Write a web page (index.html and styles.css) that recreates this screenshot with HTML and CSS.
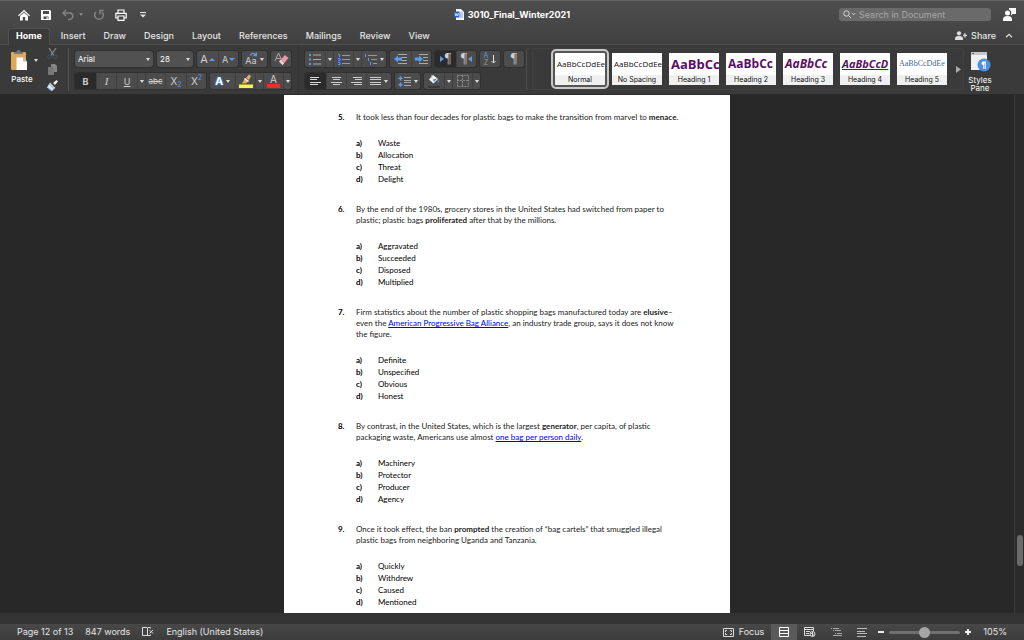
FILE: index.html
```
<!DOCTYPE html>
<html lang="en">
<head>
    <meta charset="UTF-8">
    <meta name="viewport" content="width=device-width, initial-scale=1.0">
    <title>3010_Final_Winter2021</title>
    <link rel="stylesheet" href="styles.css">
</head>
<body>
    <header class="titlebar">
        <div class="quick">
            <button aria-label="Home"><svg width="12" height="12" viewBox="0 0 12 12"><path d="M0 6.4L6 .8l6 5.6-.8.9L6 2.6.8 7.3z" fill="#fff"/><path d="M2 7l4-3.6L10 7v4.5H7.2V8H4.8v3.500H2z" fill="#fff"/></svg></button>
            <button aria-label="Save"><svg width="12" height="12" viewBox="0 0 12 12"><path d="M1 1h9l1 1v9H1z" fill="#fff"/><path d="M3 2h6v3H3zM3.500 7.500h5V10h-5z" fill="#484848"/><path d="M6.500 8h1.200v2H6.500z" fill="#fff"/></svg></button>
            <button class="undo" aria-label="Undo"><svg width="12" height="12" viewBox="0 0 12 12" fill="none" stroke="#858585" stroke-width="1.400"><path d="M4 1L1 4l3 3M1 4h6.500a3 3 0 0 1 0 6.500H6"/></svg><i class="caret dim"></i></button>
            <button aria-label="Redo"><svg width="12" height="12" viewBox="0 0 12 12" fill="none" stroke="#858585" stroke-width="1.400"><path d="M3 3a4.300 4.300 0 1 0 6 0M6.500 1.500h4M7 1.500v4"/></svg></button>
            <button aria-label="Print"><svg width="12" height="12" viewBox="0 0 12 12" fill="none" stroke="#fff" stroke-width="1.200"><path d="M3 4V1h6v3M2.500 9H.8V4.300h10.400V9H9.500M3 7h6v4.400H3z"/></svg></button>
            <button class="more" aria-label="Customize toolbar"><svg width="6" height="6" viewBox="0 0 6 6"><path d="M0 0h6v1H0zM0 2.500h6L3 5.500z" fill="#e6e6e6"/></svg></button>
        </div>
        <h1 class="title"><svg width="10" height="11" viewBox="0 0 10 11"><path d="M2 0h5l3 3v8H2z" fill="#f3f6fb"/><path d="M6 4h3M6 6h3M6 8h3" stroke="#6b9bdd"/><path d="M0 2.500h5.500v6H0z" fill="#2b5fc0"/><path d="M1 4l.9 3L2.800 4.500 3.700 7l.8-3" fill="none" stroke="#fff" stroke-width=".7"/></svg>3010_Final_Winter2021</h1>
        <div class="title-right">
            <label class="search"><svg width="13" height="9" viewBox="0 0 13 9" fill="none" stroke="#d8d8d8"><circle cx="3.500" cy="3.500" r="2.700"/><path d="M5.500 5.500L8 8M9 3.200l1.600 1.600L12.200 3.200"/></svg><input type="text" placeholder="Search in Document" aria-label="Search in Document"></label>
            <button aria-label="Account"><svg width="13" height="13" viewBox="0 0 13 13" fill="#fff"><path d="M6 0h7v6H9.500L8 7.500V6C9 5 8 2 6 1.800z"/><circle cx="4.500" cy="5" r="2.500"/><path d="M0 13v-2c0-2 2-3 4.500-3S9 9 9 11v2z"/></svg></button>
        </div>
    </header>

    <nav class="tabs">
        <a href="#" class="tab active">Home</a>
        <a href="#" class="tab">Insert</a>
        <a href="#" class="tab">Draw</a>
        <a href="#" class="tab">Design</a>
        <a href="#" class="tab">Layout</a>
        <a href="#" class="tab">References</a>
        <a href="#" class="tab">Mailings</a>
        <a href="#" class="tab">Review</a>
        <a href="#" class="tab">View</a>
        <button class="share"><svg width="12" height="9" viewBox="0 0 12 9" fill="#ddd"><circle cx="4" cy="2.300" r="2.100"/><path d="M0 9V7.500C0 5.500 2 5 4 5s4 .5 4 2.500V9zM9.300 2h1.200v1.800H12V5h-1.500v1.800H9.300V5H8V3.800h1.300z"/></svg>Share</button>
        <button class="collapse" aria-label="Collapse ribbon"><svg width="8" height="5" viewBox="0 0 8 5" fill="none" stroke="#ddd" stroke-width="1.300"><path d="M1 4.300L4 1.300l3 3"/></svg></button>
    </nav>

    <section class="ribbon">
        <div class="clipboard">
            <button class="paste"><span class="paste-icon"><svg width="18" height="22" viewBox="0 0 18 22"><rect x="1" y="3" width="15" height="18" rx="1" fill="#dba95c"/><path d="M4 5V3h2.500a2 2 0 0 1 4 0H13v2z" fill="#777"/><path d="M6.500 8.500h6.500l4 4V21H6.500z" fill="#fff"/><path d="M13 8.500l4 4h-4z" fill="#bbb"/></svg><i class="caret"></i></span><span class="paste-text">Paste</span></button>
            <div class="clip-tools">
                <button aria-label="Cut"><svg width="11" height="11" viewBox="0 0 11 11" fill="none"><path d="M2 0l5 7.500M9 0L4 7.500" stroke="#858585" stroke-width="1.300"/><circle cx="2.500" cy="8.800" r="1.700" stroke="#3b5273"/><circle cx="8.500" cy="8.800" r="1.700" stroke="#3b5273"/></svg></button>
                <button aria-label="Copy"><svg width="11" height="11" viewBox="0 0 11 11"><path d="M4 0h4l2 2v6H4z" fill="#858585"/><path d="M1 3h4l2 2v6H1z" fill="#777"/></svg></button>
                <button aria-label="Format painter"><svg width="11" height="11" viewBox="0 0 11 11"><path d="M9.500 0L11 1.500 8 5 6 3z" fill="#eee"/><path d="M3 2.500L8.500 8 7 9 2 4z" fill="#ccc"/><path d="M2 4l5 5-2 2-5-3.500z" fill="#d8e9ff"/><path d="M1 7l4 4-3-1z" fill="#5a9cf0"/></svg></button>
            </div>
        </div>

        <div class="group font-group">
            <div class="row">
                <label class="combo font-name"><select aria-label="Font"><option>Arial</option></select><i class="caret"></i></label>
                <label class="combo font-size"><select aria-label="Font size"><option>28</option></select><i class="caret"></i></label>
                <div class="set">
                    <button class="w21" aria-label="Grow font"><span class="glyph big">A</span><i class="tri up"></i></button>
                    <button class="w20" aria-label="Shrink font"><span class="glyph">A</span><i class="tri down"></i></button>
                </div>
                <div class="set"><button class="w25" aria-label="Change case"><span class="glyph case">Aa<svg width="7" height="5" viewBox="0 0 7 5" fill="none" stroke="#5b9bea" stroke-width="1.300"><path d="M.5 3.500C1 1 4 .5 5.500 3M6.300.5v3H3.500"/></svg></span><i class="caret"></i></button></div>
                <div class="set"><button class="w20" aria-label="Clear formatting"><svg width="15" height="14" viewBox="0 0 15 14"><path d="M1 9L4.500 1 8 9M2.300 6.500h4.500" fill="none" stroke="#aaa"/><path d="M5 9.500L11 3l3.500 3L8.500 13z" fill="#e898a8"/><path d="M5 9.500l1.600-1.700 3.500 3.200-1.600 2z" fill="#f7c9d2"/></svg></button></div>
            </div>
            <div class="row">
                <div class="set">
                    <button class="w21 on"><b>B</b></button>
                    <button class="w20 serif"><i>I</i></button>
                    <button class="w21"><u>U</u></button>
                    <button class="w8" aria-label="Underline style"><i class="caret"></i></button>
                    <button class="w20 strike"><s>abc</s></button>
                    <button class="w21 script">X<sub>2</sub></button>
                    <button class="w20 script">X<sup>2</sup></button>
                </div>
                <div class="set">
                    <button class="w25 effects"><b>A</b><i class="caret"></i></button>
                    <button class="w20" aria-label="Highlight"><svg width="14" height="14" viewBox="0 0 14 14"><path d="M0 10.500h14V14H0z" fill="#fdf53c"/><path d="M7 4l3-3.500 2 1.500-2 4z" fill="#e0b068"/><path d="M6 4l4 3-3 2.500H3z" fill="#d8b070"/><path d="M6 4l4 3-1 1-4-3z" fill="#eee"/></svg></button>
                    <button class="w8" aria-label="Highlight color"><i class="caret"></i></button>
                    <button class="w20 color" aria-label="Font color"><span>A</span></button>
                    <button class="w8" aria-label="Font color menu"><i class="caret"></i></button>
                </div>
            </div>
        </div>

        <div class="group para-group">
            <div class="row">
                <div class="set">
                    <button class="w20" aria-label="Bullets"><svg width="12" height="11" viewBox="0 0 12 11"><path d="M0 0h2v2H0zM0 4.500h2v2H0zM0 9h2v2H0z" fill="#5b9bea"/><path d="M4 1h8M4 5.500h8M4 10h8" stroke="#aaa"/></svg></button>
                    <button class="w8" aria-label="Bullet styles"><i class="caret"></i></button>
                    <button class="w20" aria-label="Numbering"><svg width="12" height="11" viewBox="0 0 12 11" fill="none"><path d="M0 .5h1.500V3M0 4.500h2v2H0M0 8.500h2v2H0" stroke="#5b9bea"/><path d="M4 1.500h8M4 5.500h8M4 9.500h8" stroke="#999"/></svg></button>
                    <button class="w8" aria-label="Numbering styles"><i class="caret"></i></button>
                    <button class="w25" aria-label="Multilevel list"><svg width="12" height="11" viewBox="0 0 12 11" fill="none"><path d="M.5 0v3M3.500 4v3M5.500 8v3" stroke="#5b9bea"/><path d="M3 1.500h9M6 5.500h6M8 9.500h4" stroke="#999"/></svg><i class="caret"></i></button>
                </div>
                <div class="set">
                    <button class="w21" aria-label="Decrease indent"><svg width="13" height="10" viewBox="0 0 13 10"><path d="M4 .5h9M7 3.500h6M7 6.500h6M4 9.500h9" stroke="#aaa"/><path d="M0 5l4-3.500v2h4v3H4v2z" fill="#5b9bea"/></svg></button>
                    <button class="w20" aria-label="Increase indent"><svg width="13" height="10" viewBox="0 0 13 10"><path d="M4 .5h9M8 3.500h5M8 6.500h5M4 9.500h9" stroke="#aaa"/><path d="M8 5L4 1.500v2H0v3h4v2z" fill="#5b9bea"/></svg></button>
                </div>
                <div class="set">
                    <button class="w21 on pilcrow" aria-label="Left to right"><i class="tri right"></i>¶</button>
                    <button class="w20 pilcrow" aria-label="Right to left">¶<i class="tri left"></i></button>
                </div>
                <div class="set"><button class="w20 sort" aria-label="Sort"><span><em>A</em>Z</span><svg width="5" height="9" viewBox="0 0 5 9" fill="none" stroke="#ddd"><path d="M2.500 0v8M.5 6l2 2 2-2"/></svg></button></div>
                <div class="set"><button class="w20 pilcrow" aria-label="Show marks">¶</button></div>
            </div>
            <div class="row">
                <div class="set">
                    <button class="w21 on" aria-label="Align left"><svg width="11" height="8" viewBox="0 0 11 8" stroke="#ddd"><path d="M0 .5h9M0 2.500h7M0 5.500h11M0 7.500h8"/></svg></button>
                    <button class="w20" aria-label="Center"><svg width="11" height="8" viewBox="0 0 11 8" stroke="#ccc"><path d="M1 .5h9M2 2.500h7M0 5.500h11M2 7.500h7"/></svg></button>
                    <button class="w20" aria-label="Align right"><svg width="11" height="8" viewBox="0 0 11 8" stroke="#ccc"><path d="M2 .5h9M4 2.500h7M0 5.500h11M3 7.500h8"/></svg></button>
                    <button class="w25" aria-label="Justify"><svg width="11" height="8" viewBox="0 0 11 8" stroke="#ccc"><path d="M0 .5h11M0 2.500h11M0 5.500h11M0 7.500h11"/></svg><i class="caret"></i></button>
                </div>
                <div class="set"><button class="w25" aria-label="Line spacing"><svg width="13" height="11" viewBox="0 0 13 11"><path d="M2.500 0L5 3H3.300v1.500H1.700V3H0zM2.500 11L0 8h1.700V6.500h1.600V8H5z" fill="#5b9bea"/><path d="M6 1.500h7M6 4.500h7M6 6.500h7M6 9.500h7" stroke="#aaa"/></svg><i class="caret"></i></button></div>
                <div class="set">
                    <button class="w20" aria-label="Shading"><svg width="12" height="13" viewBox="0 0 12 13"><path d="M5 0l5 4-4.500 4.500L1 4.500z" fill="#f4f4f4"/><path d="M4 0v4" stroke="#ccc"/><path d="M5 4.500l4-1-3 3.500z" fill="#3f80d8"/><path d="M9.500 4.500c2 1 1.500 3 .5 3.500z" fill="#5b9bea"/><path d="M0 11h12v2H0z" fill="#3a3a3a"/></svg></button>
                    <button class="w8" aria-label="Shading color"><i class="caret"></i></button>
                    <button class="w20" aria-label="Borders"><svg width="12" height="12" viewBox="0 0 12 12" fill="none" stroke="#888" stroke-dasharray="2 1"><path d="M.5.5h11v11H.5zM5.500 0v12M0 5.500h12"/></svg></button>
                    <button class="w8" aria-label="Border styles"><i class="caret"></i></button>
                </div>
            </div>
        </div>

        <div class="gallery">
            <button class="style selected"><span class="sample">AaBbCcDdEe</span><span class="name">Normal</span></button>
            <button class="style"><span class="sample">AaBbCcDdEe</span><span class="name">No Spacing</span></button>
            <button class="style"><span class="sample h">AaBbCc</span><span class="name">Heading 1</span></button>
            <button class="style"><span class="sample h h2">AaBbCc</span><span class="name">Heading 2</span></button>
            <button class="style"><span class="sample h h3">AaBbCc</span><span class="name">Heading 3</span></button>
            <button class="style"><span class="sample h h4">AaBbCcD</span><span class="name">Heading 4</span></button>
            <button class="style"><span class="sample h5">AaBbCcDdEe</span><span class="name">Heading 5</span></button>
            <button class="next" aria-label="More styles"><svg width="5" height="7" viewBox="0 0 5 7"><path d="M0 0l5 3.500L0 7z" fill="#aaa"/></svg></button>
        </div>
        <button class="styles-pane"><svg width="21" height="20" viewBox="0 0 21 20"><path d="M1 0h16v18H1z" fill="#f1f1f1"/><path d="M1 0h16v3H1z" fill="#c5c5c5"/><path d="M2 1h2v1H2z" fill="#666"/><circle cx="14" cy="13" r="6.500" fill="#4b8fe8"/><path d="M15.300 9.500H13a1.800 1.800 0 0 0 0 3.500h.8z" fill="#fff"/><path d="M13.800 9.500V17M15.300 9.500V17" stroke="#fff" fill="none"/></svg>Styles<br>Pane</button>
    </section>

    <main class="workspace">
        <div class="canvas">
            <article class="page">
                <section class="question">
                    <span class="num">5.</span>
                    <p>It took less than four decades for plastic bags to make the transition from marvel to <b>menace</b>.</p>
                    <ul>
                        <li><b>a)</b>Waste</li>
                        <li><b>b)</b>Allocation</li>
                        <li><b>c)</b>Threat</li>
                        <li><b>d)</b>Delight</li>
                    </ul>
                </section>
                <section class="question">
                    <span class="num">6.</span>
                    <p>By the end of the 1980s, grocery stores in the United States had switched from paper to<br>plastic; plastic bags <b>proliferated</b> after that by the millions.</p>
                    <ul>
                        <li><b>a)</b>Aggravated</li>
                        <li><b>b)</b>Succeeded</li>
                        <li><b>c)</b>Disposed</li>
                        <li><b>d)</b>Multiplied</li>
                    </ul>
                </section>
                <section class="question">
                    <span class="num">7.</span>
                    <p>Firm statistics about the number of plastic shopping bags manufactured today are <b>elusive</b>–<br>even the <a href="#">American Progressive Bag Alliance</a>, an industry trade group, says it does not know<br>the figure.</p>
                    <ul>
                        <li><b>a)</b>Definite</li>
                        <li><b>b)</b>Unspecified</li>
                        <li><b>c)</b>Obvious</li>
                        <li><b>d)</b>Honest</li>
                    </ul>
                </section>
                <section class="question">
                    <span class="num">8.</span>
                    <p>By contrast, in the United States, which is the largest <b>generator</b>, per capita, of plastic<br>packaging waste, Americans use almost <a href="#">one bag per person daily</a>.</p>
                    <ul>
                        <li><b>a)</b>Machinery</li>
                        <li><b>b)</b>Protector</li>
                        <li><b>c)</b>Producer</li>
                        <li><b>d)</b>Agency</li>
                    </ul>
                </section>
                <section class="question">
                    <span class="num">9.</span>
                    <p>Once it took effect, the ban <b>prompted</b> the creation of “bag cartels” that smuggled illegal<br>plastic bags from neighboring Uganda and Tanzania.</p>
                    <ul>
                        <li><b>a)</b>Quickly</li>
                        <li><b>b)</b>Withdrew</li>
                        <li><b>c)</b>Caused</li>
                        <li><b>d)</b>Mentioned</li>
                    </ul>
                </section>
            </article>
        </div>
        <div class="scrollbar"><div class="thumb"></div></div>
    </main>

    <footer class="status">
        <span>Page 12 of 13</span>
        <span>847 words</span>
        <button aria-label="Proofing"><svg width="12" height="10" viewBox="0 0 12 10" fill="none" stroke="#ddd"><path d="M8.500 1.500V.5H6L5.500 1 5 .5H.5v8H5l.5.5.5-.5h2.500v-1M5.500 1v8M7.500 3l3.500 3.500M11 3L7.500 6.500"/></svg></button>
        <span>English (United States)</span>
        <div class="views">
            <button class="focus"><svg width="11" height="9" viewBox="0 0 11 9" fill="none" stroke="#ddd"><path d="M.5.5h10v8H.5z"/><path d="M2.500 4V2.500H4M7 2.500h1.500V4M8.500 5v1.500H7M4 6.500H2.500V5"/></svg>Focus</button>
            <button class="view on" aria-label="Print layout"><svg width="10" height="10" viewBox="0 0 10 10" fill="none" stroke="#fff"><path d="M.5.5h9v9h-9zM1 3.500h8M1 6.500h8"/></svg></button>
            <button class="view" aria-label="Web layout"><svg width="12" height="10" viewBox="0 0 12 10" fill="none" stroke="#ddd"><path d="M9.500 4V.5h-9v8H6M0 2.500h9M2 4.500h4M2 6.500h3"/><circle cx="8.500" cy="7" r="2.500"/><path d="M7 6l3 2.500M8.500 4.500v5"/></svg></button>
            <button class="view" aria-label="Outline"><svg width="11" height="8" viewBox="0 0 11 8" stroke="#aaa"><path d="M0 .5h1M2 .5h6M2 2.500h1M4 2.500h6M4 5.500h1M6 5.500h5M2 7.500h9"/></svg></button>
            <button class="view" aria-label="Draft"><svg width="11" height="9" viewBox="0 0 11 9" stroke="#bbb"><path d="M0 .5h10M0 3.500h8M0 5.500h10M0 8.500h9"/></svg></button>
        </div>
        <div class="zoom">
            <button aria-label="Zoom out"><svg width="6" height="6" viewBox="0 0 6 6"><path d="M0 2h6v2H0z" fill="#eee"/></svg></button>
            <input type="range" min="0" max="100" value="50" aria-label="Zoom">
            <button aria-label="Zoom in"><svg width="6" height="6" viewBox="0 0 6 6"><path d="M0 2h2V0h2v2h2v2H4v2H2V4H0z" fill="#eee"/></svg></button>
        </div>
        <span>105%</span>
    </footer>
</body>
</html>
```
FILE: styles.css
```
* { box-sizing: border-box; }
body {
    margin: 0;
    height: 100vh;
    display: flex;
    flex-direction: column;
    overflow: hidden;
    background: #282828;
    color: #e6e6e6;
    font-family: Inter, "Liberation Sans", sans-serif;
    font-size: 9px;
}
button {
    display: flex;
    align-items: center;
    justify-content: center;
    padding: 0;
    border: 0;
    background: none;
    color: inherit;
    font: inherit;
}
svg { display: block; flex: none; }

/* title bar */
.titlebar {
    display: grid;
    grid-template-columns: 1fr auto 1fr;
    align-items: center;
    height: 28px;
    border-top: 1px solid #636363;
    background: linear-gradient(#4d4d4d, #464646);
}
.quick { display: flex; align-items: center; gap: 10px; padding-left: 18px; }
.quick .undo { gap: 5px; }
.quick .more { margin-left: 3px; }
.title {
    display: flex;
    align-items: center;
    gap: 4px;
    margin: 0;
    color: #fff;
    font-size: 9px;
    font-weight: 700;
}
.title-right { display: flex; align-items: center; justify-content: flex-end; gap: 12px; padding-right: 8px; }
.search {
    display: flex;
    align-items: center;
    gap: 3px;
    width: 152px;
    height: 13px;
    padding-left: 4px;
    border-radius: 3px;
    background: #6a6a6a;
}
.search input {
    flex: 1;
    min-width: 0;
    padding: 0;
    border: 0;
    background: none;
    color: #fff;
    font: inherit;
}
.search input::placeholder { color: #a6a6a6; }

/* ribbon tabs */
.tabs {
    display: flex;
    align-items: stretch;
    height: 17px;
    padding: 0 11px 0 8px;
    background: linear-gradient(#464646, #404040);
    border-bottom: 1px solid #505050;
    font-size: 9px;
}
.tab {
    padding: 0 9px;
    color: #e4e4e4;
    font-weight: 500;
    line-height: 15px;
    text-decoration: none;
}
.tab.active {
    height: 17px;
    padding: 0 7px;
    margin-right: 2px;
    border: 1px solid #505050;
    border-bottom: 0;
    border-radius: 3px 3px 0 0;
    background: #3a3a3a;
    color: #fff;
    font-weight: 700;
    line-height: 13px;
}
.share, .collapse { padding-bottom: 2px; }
.share { gap: 4px; margin-left: auto; font-weight: 500; }
.collapse { margin-left: 9px; }

/* ribbon */
.ribbon {
    display: flex;
    height: 50px;
    background: #3a3a3a;
    border-bottom: 1px solid #2b2b2b;
}
.caret {
    flex: none;
    border: 2px solid transparent;
    border-top: 3px solid #ddd;
    border-bottom: 0;
}
.caret.dim { border-top-color: #858585; }
.clipboard {
    display: flex;
    width: 69px;
    margin: 3px 0;
    padding-left: 10px;
    border-right: 1px solid #555;
}
.paste { flex-direction: column; justify-content: flex-start; padding-top: 1px; gap: 3px; color: #fff; font-size: 8px; line-height: 10px; font-weight: 500; }
.paste-icon { display: flex; align-items: center; gap: 6px; }
.paste-text { padding-right: 4px; }
.clip-tools { display: flex; flex-direction: column; justify-content: space-between; margin-left: 9px; }
.group { display: flex; flex-direction: column; gap: 6px; padding-top: 6px; }
.font-group { margin-left: 6px; padding-right: 7px; border-right: 1px solid #333; }
.para-group { margin-left: 6px; padding-right: 8px; }
.row { display: flex; gap: 4px; height: 16px; }
.set {
    display: flex;
    border-radius: 2px;
    background: #4c4c4c;
    box-shadow: 0 0 0 1px #303030;
    overflow: hidden;
}
.set button { gap: 3px; color: #d0d0d0; }
.set button + button { border-left: 1px solid #404040; }
.set .on { background: #2b2b2b; }
.w8 { width: 8px; }
.w20 { width: 20px; }
.w21 { width: 21px; }
.w25 { width: 25px; }
.combo {
    display: flex;
    align-items: center;
    padding-right: 3px;
    border-radius: 3px;
    background: #515151;
    box-shadow: 0 0 0 1px #303030;
}
.combo select {
    flex: 1;
    min-width: 0;
    appearance: none;
    padding: 0 0 0 3px;
    border: 0;
    background: none;
    color: #fff;
    font: inherit;
    font-size: 8px;
}
.font-name { width: 78px; }
.font-size { width: 36px; }
.glyph { font-size: 9px; }
.glyph.big { font-size: 11px; }
.set .w21 .glyph, .set .w20 .glyph { margin-right: -2px; }
.glyph.case { position: relative; padding-top: 3px; }
.case svg { position: absolute; top: 0; right: 0; }
.tri { border: 3px solid transparent; flex: none; }
.tri.up { border-bottom-color: #5b9bea; border-top: 0; }
.tri.down { border-top-color: #5b9bea; border-bottom: 0; }
.tri.right { border-left: 4px solid #5b9bea; border-right: 0; }
.tri.left { border-right: 4px solid #5b9bea; border-left: 0; }
.serif { font-family: "Liberation Serif", serif; font-size: 11px; }
.set .script { gap: 0; font-size: 10px; }
.script sub, .script sup { color: #5b9bea; font-size: 7px; line-height: 7px; }
.script sub { align-self: flex-end; padding-bottom: 1px; }
.script sup { align-self: flex-start; padding-top: 1px; }
.strike { font-size: 8px; }
.effects b { color: #fff; font-size: 11px; text-shadow: 0 0 2px #3b8cff, 0 0 2px #3b8cff; }
.color span { border-bottom: 4px solid #e53224; padding: 0 3px; line-height: 10px; font-size: 10px; }
.set .pilcrow { gap: 1px; font-family: "Liberation Serif", serif; font-size: 14px; line-height: 14px; }
.sort span { font-size: 7px; line-height: 7px; color: #999; }
.sort em { display: block; color: #5b9bea; font-style: normal; }

/* style gallery */
.gallery {
    display: flex;
    align-items: center;
    gap: 7px;
    flex: 1;
    min-width: 0;
    height: 42px;
    margin-top: 3px;
    padding-left: 22px;
    border: 1px solid #414141;
    border-radius: 3px;
    box-shadow: -5px 0 0 #3a3a3a, -6px 0 0 #505050;
}
.style {
    flex: none;
    flex-direction: column;
    align-items: stretch;
    width: 50px;
    height: 32px;
    overflow: hidden;
    background: #fff;
    color: #111;
}
.style.selected { outline: 2px solid #c8c8c8; outline-offset: 2px; border-radius: 1px; box-shadow: 0 0 0 3px #555; }
.sample {
    height: 22px;
    padding-left: 2px;
    overflow: hidden;
    font-family: "Open Sans", sans-serif;
    font-size: 8px;
    line-height: 22px;
    text-align: left;
    white-space: nowrap;
}
.name { height: 10px; background: #f0f0f0; font-size: 7px; line-height: 10px; }
.sample.h { color: #5b0f66; font-size: 13px; font-weight: 700; }
.sample.h2 { font-size: 12px; }
.sample.h3 { font-size: 12px; font-style: italic; }
.sample.h4 { font-size: 11px; font-style: italic; text-decoration: underline; }
.sample.h5 { color: #44689c; font-family: "Liberation Serif", serif; }
.next { margin: 0 2px 0 auto; }
.styles-pane {
    flex-direction: column;
    justify-content: flex-start;
    width: 32px;
    margin-right: 28px;
    padding-top: 7px;
    color: #fff;
    font-size: 8px;
    line-height: 8px;
}
.styles-pane svg { margin-bottom: 4px; }

/* document */
.workspace { display: flex; flex: 1; min-height: 0; }
.canvas { display: flex; flex: 1; }
.page {
    width: 44%;
    margin: 0 auto;
    padding: 17px 0 0 54px;
    overflow: hidden;
    background: #fff;
    color: #000;
    font-family: Lato, sans-serif;
    font-size: 8px;
}
.question { display: grid; grid-template-columns: 18px 1fr; margin-bottom: 19px; line-height: 11px; }
.question p { margin: 0 0 14px; color: #222; white-space: nowrap; }
.question a { color: #0000ee; }
.num { font-weight: 700; }
.question ul { grid-column: 2; margin: 0; padding: 0; list-style: none; line-height: 12px; }
.question li { display: grid; grid-template-columns: 22px 1fr; }
.scrollbar {
    display: flex;
    flex-direction: column;
    align-items: center;
    justify-content: flex-end;
    width: 10px;
    padding-bottom: 47px;
    border-left: 1px solid #3c3c3c;
    background: #2b2b2b;
}
.thumb { width: 6px; height: 31px; border-radius: 3px; background: #6b6b6b; }

/* status bar */
.status {
    display: flex;
    align-items: stretch;
    gap: 12px;
    height: 27px;
    padding: 0 17px;
    border-top: 11px solid #333;
    background: linear-gradient(#484848, #3c3c3c);
    line-height: 16px;
}
.views { display: flex; margin-left: auto; }
.focus { gap: 5px; margin-right: 7px; }
.view { width: 26px; }
.view.on { background: #5a5a5a; }
.zoom { display: flex; align-items: center; gap: 5px; margin-left: -9px; }
.zoom input {
    appearance: none;
    width: 71px;
    height: 3px;
    margin: 0;
    border-radius: 2px;
    background: #707070;
}
.zoom input::-webkit-slider-thumb {
    appearance: none;
    width: 11px;
    height: 11px;
    border-radius: 50%;
    background: #a5a5a5;
}
```
